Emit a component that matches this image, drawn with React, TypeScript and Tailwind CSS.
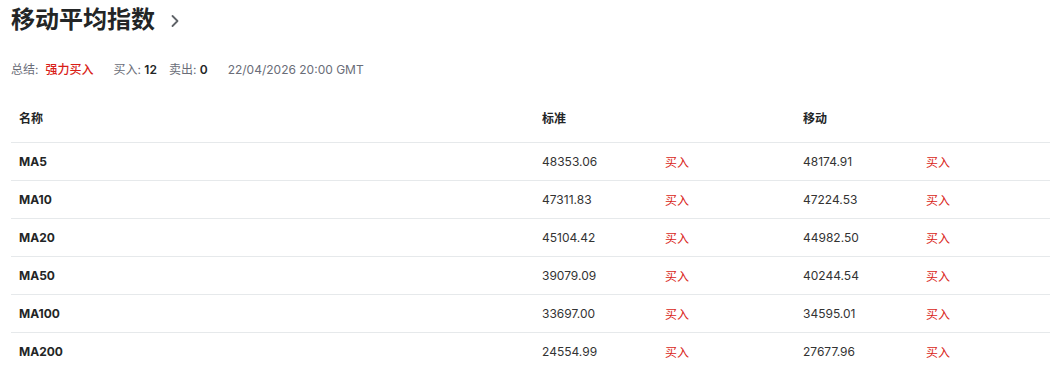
import { ChevronRight } from 'lucide-react'

const rows = [
  { name: 'MA5', std: '48353.06', mov: '48174.91' },
  { name: 'MA10', std: '47311.83', mov: '47224.53' },
  { name: 'MA20', std: '45104.42', mov: '44982.50' },
  { name: 'MA50', std: '39079.09', mov: '40244.54' },
  { name: 'MA100', std: '33697.00', mov: '34595.01' },
  { name: 'MA200', std: '24554.99', mov: '27677.96' },
]

const cols = 'grid grid-cols-[523px_123px_138px_123px_132px]'

export default function App() {
  return (
    <div className="bg-white min-h-screen pl-[11px] font-['Inter','Noto_Sans_CJK_SC',sans-serif] text-[#232526]">
      {/* Title */}
      <div className="flex items-center h-10">
        <h2 className="text-2xl font-bold leading-10">移动平均指数</h2>
        <ChevronRight size={20} strokeWidth={2.2} className="ml-[10px] mt-[2px] text-[#5f6368]" />
      </div>

      {/* Summary */}
      <div className="mt-[22px] flex items-center text-xs leading-4">
        <span className="text-[#6a6d78]">总结:</span>
        <span className="ml-[7px] font-medium text-[#d91e18]">强力买入</span>
        <span className="ml-[20px] text-[#6a6d78]">
          买入: <span className="font-semibold text-[#232526]">12</span>
        </span>
        <span className="ml-[12px] text-[#6a6d78]">
          卖出: <span className="font-semibold text-[#232526]">0</span>
        </span>
        <span className="ml-[20px] text-[#6a6d78]">22/04/2026 20:00 GMT</span>
      </div>

      {/* Table */}
      <div className="mt-[17px] text-xs">
        <div className={`${cols} h-12 items-center border-b border-[#e6e9eb] font-semibold`}>
          <div className="px-2">名称</div>
          <div className="px-2">标准</div>
          <div />
          <div className="px-2">移动</div>
          <div />
        </div>
        {rows.map((r) => (
          <div key={r.name} className={`${cols} h-[38px] items-center border-b border-[#e6e9eb]`}>
            <div className="px-2 font-bold">{r.name}</div>
            <div className="px-2 text-[#333]">{r.std}</div>
            <div className="px-2 text-[#d91e18] pt-[2px]">买入</div>
            <div className="px-2 text-[#333]">{r.mov}</div>
            <div className="px-2 text-[#d91e18] pt-[2px]">买入</div>
          </div>
        ))}
      </div>
    </div>
  )
}
